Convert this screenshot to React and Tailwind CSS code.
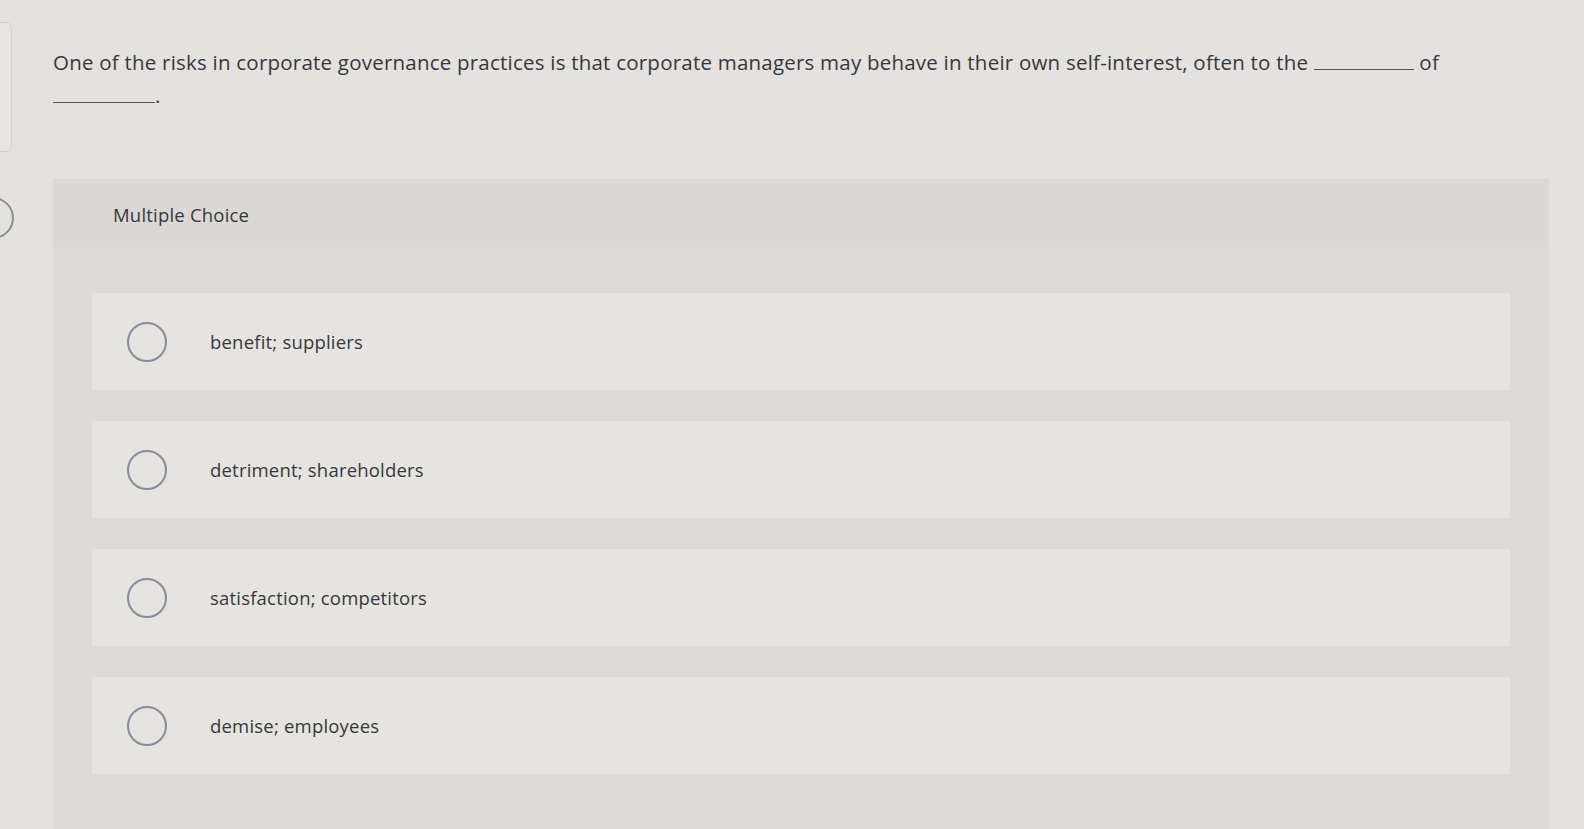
export default function App() {
  const options = [
    "benefit; suppliers",
    "detriment; shareholders",
    "satisfaction; competitors",
    "demise; employees",
  ];

  return (
    <div
      className="relative h-[829px] w-[1584px] overflow-hidden bg-[#e3e2de] text-[#37373a]"
      style={{ fontFamily: "'Open Sans', Lato, sans-serif" }}
    >
      {/* partial side elements */}
      <div className="absolute left-[-20px] top-[22px] h-[130px] w-[32px] rounded-md border border-[#d2d1cd] bg-[#e6e5e1]" />
      <div className="absolute left-[-28px] top-[197px] h-[42px] w-[42px] rounded-full border-2 border-[#8d8d8f]" />

      <div className="pl-[53px] pt-[46px]">
        <p className="text-[20.5px] leading-[33px] tracking-[0.22px]">
          One of the risks in corporate governance practices is that corporate
          managers may behave in their own self-interest, often to the{" "}
          <span className="inline-block w-[100px] border-b border-[#555]" /> of
          <br />
          <span className="inline-block w-[102px] border-b border-[#555]" />.
        </p>
      </div>

      <div className="ml-[53px] mt-[67px] w-[1496px] bg-[#dcdbd7] pb-[80px]">
        <div className="flex h-[68px] items-center bg-[#d9d8d4] pl-[60px] pt-[3px] text-[18.5px] tracking-[0.2px]">
          Multiple Choice
        </div>
        <div className="flex flex-col gap-[31px] px-[39px] pt-[46px]">
          {options.map((o) => (
            <div
              key={o}
              className="flex h-[97px] items-center bg-[#e5e4e0]"
            >
              <div className="ml-[35px] h-[40px] w-[40px] rounded-full border-2 border-[#878c9b]" />
              <span className="ml-[43px] text-[18.5px] tracking-[0.2px]">{o}</span>
            </div>
          ))}
        </div>
      </div>
    </div>
  );
}
